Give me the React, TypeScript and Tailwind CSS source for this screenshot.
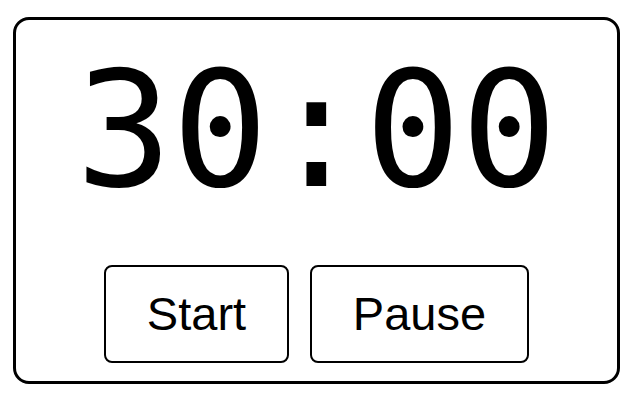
export default function App() {
  return (
    <div className="pl-[13px] pt-[17px]">
      <div className="w-[607px] h-[367px] rounded-[16px] border-[3px] border-black bg-white pt-[16px] flex flex-col items-center">
        <div
          className="slashed-zero text-[160px] leading-[190px] text-black"
          style={{ fontFamily: '"DejaVu Sans Mono", Menlo, monospace' }}
        >
          30:00
        </div>
        <div className="mt-[39px] flex gap-[21px]">
          <button
            className="h-[98px] w-[185px] rounded-[8px] border-2 border-black bg-white text-[47px] text-black"
            style={{ fontFamily: '"Liberation Sans", Arial, sans-serif' }}
          >
            Start
          </button>
          <button
            className="h-[98px] w-[219px] rounded-[8px] border-2 border-black bg-white text-[47px] text-black"
            style={{ fontFamily: '"Liberation Sans", Arial, sans-serif' }}
          >
            Pause
          </button>
        </div>
      </div>
    </div>
  );
}
